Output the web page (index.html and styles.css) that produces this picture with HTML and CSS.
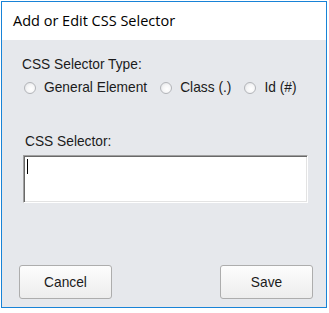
FILE: index.html
```html
<!DOCTYPE html>
<html lang="en">
<head>
    <meta charset="UTF-8">
    <title>Add or Edit CSS Selector</title>
    <link rel="stylesheet" href="styles.css">
</head>
<body>
    <div class="window">
        <div class="titlebar">Add or Edit CSS Selector</div>

        <div class="content">
            <div class="type-label">CSS Selector Type:</div>

            <div class="radio-row">
                <label class="option"><span class="radio"></span>General Element</label>
                <label class="option"><span class="radio"></span>Class (.)</label>
                <label class="option"><span class="radio"></span>Id (#)</label>
            </div>

            <div class="selector-label">CSS Selector:</div>
            <div class="textbox"><span class="caret"></span></div>

            <div class="buttons">
                <button class="btn">Cancel</button>
                <button class="btn">Save</button>
            </div>
        </div>
    </div>
</body>
</html>
```

FILE: styles.css
```css
body {
    margin: 0;
    background: #FFF;
    font-family: "Liberation Sans", Arial, sans-serif;
    font-size: 13.75px;
    color: #1b1b1b;
}

.window {
    margin: 1px 0 0 1px;
    width: 324px;
    height: 305px;
    border: 1px solid #1883D7;
    display: flex;
    flex-direction: column;
}

.titlebar {
    height: 29px;
    padding: 9px 0 0 11px;
    background: #FFF;
    font-family: "Open Sans", sans-serif;
    font-size: 14.5px;
    line-height: 20px;
    color: #000;
}

.content {
    flex: 1;
    background: #E6E8EC;
    padding: 17px 13px 8px 17px;
    display: flex;
    flex-direction: column;
    line-height: 16px;
}

.type-label {
    margin-left: 3px;
}

.radio-row {
    margin: 7px 0 0 5px;
    display: flex;
    gap: 13px;
}

.option {
    display: flex;
    align-items: center;
    gap: 8px;
}

.radio {
    width: 10px;
    height: 10px;
    border-radius: 50%;
    border: 1px solid #b3b5b9;
    background: radial-gradient(circle at 60% 60%, #fff 0%, #f6f6f7 45%, #dcdee1 100%);
}

.selector-label {
    margin: 38px 0 0 6px;
}

.textbox {
    margin: 5px 0 0 4px;
    width: 283px;
    height: 46px;
    background: #FFF;
    border: 1px solid;
    border-color: #a0a0a0 #fff #fff #a0a0a0;
    box-shadow: inset 1px 1px 0 #696969, inset -1px -1px 0 #e3e3e3;
}

.caret {
    display: block;
    width: 1px;
    height: 15px;
    margin: 3px 0 0 3px;
    background: #000;
}

.buttons {
    margin-top: auto;
    display: flex;
    justify-content: space-between;
}

.btn {
    width: 93px;
    height: 34px;
    border: 1px solid #adadad;
    border-radius: 3px;
    background: linear-gradient(#fdfdfd, #ededed);
    font-family: "Liberation Sans", Arial, sans-serif;
    font-size: 13.75px;
    color: #1b1b1b;
}
```
